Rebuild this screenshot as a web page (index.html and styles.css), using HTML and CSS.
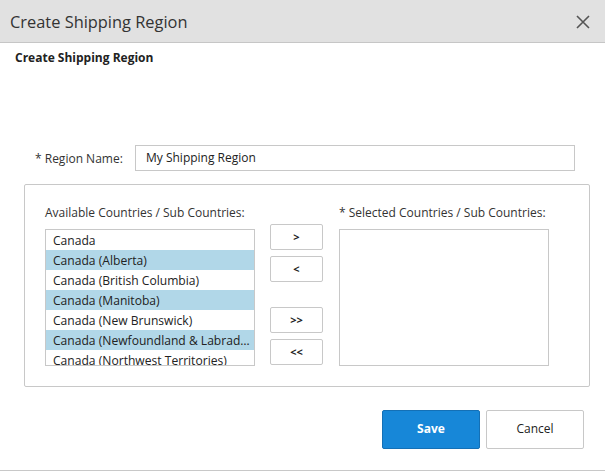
FILE: index.html
```html
<!DOCTYPE html>
<html>
<head>
<meta charset="utf-8">
<link rel="stylesheet" href="styles.css">
</head>
<body>
<div class="dialog">
  <div class="header">
    <div class="title">Create Shipping Region</div>
    <svg class="close" width="14" height="14" viewBox="0 0 14 14"><path d="M1 1L13 13M13 1L1 13" stroke="#555" stroke-width="1.6" fill="none"/></svg>
  </div>
  <div class="body">
    <div class="subtitle">Create Shipping Region</div>
    <div class="name-row">
      <label class="name-label">* Region Name:</label>
      <div class="input">My Shipping Region</div>
    </div>
    <div class="picker">
      <div class="col">
        <div class="col-label">Available Countries / Sub Countries:</div>
        <div class="list">
          <div class="item">Canada</div>
          <div class="item sel">Canada (Alberta)</div>
          <div class="item">Canada (British Columbia)</div>
          <div class="item sel">Canada (Manitoba)</div>
          <div class="item">Canada (New Brunswick)</div>
          <div class="item sel">Canada (Newfoundland &amp; Labrador)</div>
          <div class="item">Canada (Northwest Territories)</div>
        </div>
      </div>
      <div class="moves">
        <div class="pair">
          <div class="mv">&gt;</div>
          <div class="mv">&lt;</div>
        </div>
        <div class="pair">
          <div class="mv">&gt;&gt;</div>
          <div class="mv">&lt;&lt;</div>
        </div>
      </div>
      <div class="col">
        <div class="col-label">* Selected Countries / Sub Countries:</div>
        <div class="list"></div>
      </div>
    </div>
    <div class="footer">
      <div class="btn save">Save</div>
      <div class="btn cancel">Cancel</div>
    </div>
  </div>
</div>
</body>
</html>
```
FILE: styles.css
```css
html, body {
  margin: 0;
  padding: 0;
  background: #fff;
}
body {
  width: 605px;
  height: 471px;
  overflow: hidden;
  font-family: "Open Sans", "Noto Sans", sans-serif;
  color: #333;
}
.dialog {
  height: 470px;
  border-bottom: 1px solid #c8c8c8;
}
.header {
  height: 42px;
  background: #e1e1e1;
  border-bottom: 1px solid #c6c6c6;
  display: flex;
  align-items: center;
  justify-content: space-between;
  padding: 0 15px 0 10px;
}
.title {
  font-size: 16.4px;
  color: #333;
}
.close {
  display: block;
  margin-top: 2px;
}
.body {
  padding: 7px 0 0 0;
}
.subtitle {
  padding-left: 15px;
  font-size: 12px;
  font-weight: 700;
  line-height: 16px;
  color: #222;
}
.name-row {
  display: flex;
  align-items: center;
  margin-top: 79px;
  padding-left: 35px;
}
.name-label {
  font-size: 12px;
  width: 100px;
}
.input {
  width: 428px;
  height: 24px;
  border: 1px solid #c8c8c8;
  font-size: 12px;
  line-height: 24px;
  padding: 0 0 0 10px;
  color: #222;
}
.picker {
  margin: 13px 0 0 24px;
  width: 514px;
  border: 1px solid #c8c8c8;
  border-radius: 2px;
  padding: 20px 30px 20px 20px;
  display: flex;
}
.col {
  width: 210px;
}
.col-label {
  font-size: 12px;
  line-height: 16px;
  margin-bottom: 8px;
  white-space: nowrap;
}
.list {
  height: 135px;
  border: 1px solid #c8c8c8;
  overflow: hidden;
  font-size: 12.1px;
  color: #222;
}
.item {
  height: 20px;
  line-height: 21px;
  padding-left: 7px;
  white-space: nowrap;
  overflow: hidden;
  text-overflow: ellipsis;
}
.item.sel {
  background: #b1d7e8;
}
.moves {
  width: 53px;
  margin: 19px 16px 0 15px;
  display: flex;
  flex-direction: column;
  gap: 25px;
}
.pair {
  display: flex;
  flex-direction: column;
  gap: 6px;
}
.mv {
  height: 24px;
  border: 1px solid #c8c8c8;
  border-radius: 2px;
  font-size: 11px;
  font-weight: 700;
  line-height: 24px;
  text-align: center;
  color: #222;
}
.footer {
  display: flex;
  justify-content: flex-end;
  gap: 6px;
  margin-top: 23px;
  padding-right: 21px;
}
.btn {
  width: 96px;
  height: 37px;
  line-height: 36px;
  text-align: center;
  font-size: 12px;
  border-radius: 2px;
}
.save {
  background: #1787d8;
  border: 1px solid #1470b6;
  color: #fff;
  font-weight: 700;
}
.cancel {
  background: #fff;
  border: 1px solid #c8c8c8;
  color: #222;
}
```
